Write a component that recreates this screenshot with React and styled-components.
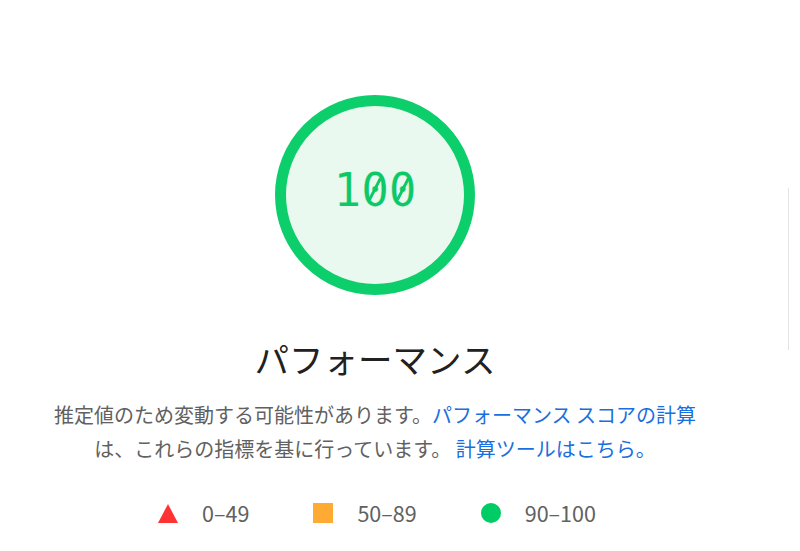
import React from 'react'
import styled, { createGlobalStyle } from 'styled-components'

const GlobalStyle = createGlobalStyle`
    html, body {
        margin: 0;
        padding: 0;
        background: #ffffff;
    }
    body {
        font-family: "Noto Sans CJK JP", "Noto Sans", sans-serif;
    }
`

const legend = [
    { shape: 'triangle', label: '0–49' },
    { shape: 'square', label: '50–89' },
    { shape: 'circle', label: '90–100' },
]

const App = () => {
    return (
        <Page>
            <GlobalStyle />
            <Column>
                <Gauge>
                    <Score>1<Zero>0</Zero><Zero>0</Zero></Score>
                </Gauge>
                <Title>パフォーマンス</Title>
                <Description>
                    推定値のため変動する可能性があります。<Link>パフォーマンス スコアの計算</Link>は、これらの指標を基に行っています。 <Link>計算ツールはこちら。</Link>
                </Description>
                <Legend>
                    {legend.map((item) => (
                        <LegendItem key={item.label}>
                            <Marker shape={item.shape} />
                            <span>{item.label}</span>
                        </LegendItem>
                    ))}
                </Legend>
            </Column>
            <Divider />
        </Page>
    )
}

export default App

const Page = styled.div`
    position: relative;
    display: flex;
    width: 800px;
    height: 551px;
    overflow: hidden;
`

const Column = styled.div`
    width: 750px;
    display: flex;
    flex-direction: column;
    align-items: center;
    padding-top: 95px;
`

const Gauge = styled.div`
    box-sizing: border-box;
    width: 200px;
    height: 200px;
    border-radius: 50%;
    border: 11px solid #0cce6b;
    background-color: #e9f9ef;
    display: flex;
    align-items: center;
    justify-content: center;
`

const Score = styled.div`
    font-family: "DejaVu Sans Mono", monospace;
    font-size: 46px;
    line-height: 1;
    color: #0cc866;
    margin-top: -10px;
    -webkit-text-stroke: 0.2px #e9f9ef;
`

/* the reference uses a slashed zero; DejaVu's is plain, so add the slash */
const Zero = styled.span`
    position: relative;
    display: inline-block;

    &::after {
        content: '';
        position: absolute;
        left: 50%;
        top: 48%;
        width: 3px;
        height: 24px;
        background-color: currentColor;
        transform: translate(-50%, -50%) rotate(27deg);
    }
`

const Title = styled.div`
    margin-top: 43px;
    font-size: 34.5px;
    line-height: 41px;
    color: #212121;
`

const Description = styled.p`
    margin: 19px 0 0;
    max-width: 654px;
    text-align: center;
    font-size: 20px;
    line-height: 34px;
    color: #616161;
`

const Link = styled.span`
    color: #1a6fe0;
`

const Legend = styled.div`
    display: flex;
    align-items: center;
    gap: 64px;
    margin-top: 35px;
    padding-left: 4px;
`

const LegendItem = styled.div`
    display: flex;
    align-items: center;
    gap: 24px;
    font-size: 21.5px;
    line-height: 24px;
    color: #616161;
`

const Marker = styled.span`
    display: block;
    width: 20px;
    height: 20px;
    ${({ shape }) => shape === 'triangle' && `
        width: 0;
        height: 0;
        border-left: 10px solid transparent;
        border-right: 10px solid transparent;
        border-bottom: 19px solid #f33;
    `}
    ${({ shape }) => shape === 'square' && `
        background-color: #fa3;
    `}
    ${({ shape }) => shape === 'circle' && `
        background-color: #0c6;
        border-radius: 50%;
    `}
`

const Divider = styled.div`
    position: absolute;
    left: 788px;
    top: 188px;
    width: 1px;
    height: 162px;
    background-color: #e3e3e3;
`
